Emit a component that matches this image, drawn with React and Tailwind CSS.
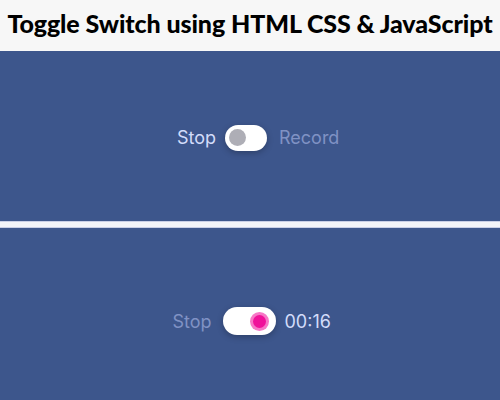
const Label = ({ children, dim, className = '' }) => (
  <span
    className={`text-[18px] ${dim ? 'text-[#8092c4]' : 'text-[#d3dcfa]'} ${className}`}
    style={{ fontFamily: 'Inter, "Noto Sans", sans-serif' }}
  >
    {children}
  </span>
);

const Toggle = ({ on }) =>
  on ? (
    <div className="w-[53px] h-[28px] rounded-full bg-white shadow-[0_2px_6px_rgba(0,0,0,0.25)] flex items-center justify-end pr-[7px]">
      <div className="w-[19px] h-[19px] rounded-full bg-[#f777c6] flex items-center justify-center">
        <div className="w-[13px] h-[13px] rounded-full bg-[#f0119a]" />
      </div>
    </div>
  ) : (
    <div className="w-[42px] h-[26px] rounded-full bg-white shadow-[0_2px_6px_rgba(0,0,0,0.25)] flex items-center pl-[4px]">
      <div className="w-[17px] h-[17px] rounded-full bg-[#aeaeb6]" />
    </div>
  );

export default function App() {
  return (
    <div className="w-[500px] h-[400px] flex flex-col bg-[#3d568c]">
      <header className="h-[51px] bg-[#f7f7f7] flex items-center justify-center pb-[3px]">
        <h1
          className="text-[25px] font-black text-black tracking-[-0.1px]"
          style={{ fontFamily: 'Lato, sans-serif' }}
        >
          Toggle Switch using HTML CSS &amp; JavaScript
        </h1>
      </header>

      <section className="h-[170px] grid grid-cols-[1fr_auto_1fr] items-center pr-[8px] pt-[3px]">
        <Label className="justify-self-end mr-[9px]">Stop</Label>
        <Toggle />
        <Label dim className="ml-[12px]">Record</Label>
      </section>

      <div className="h-[7px] bg-[#f2f3f8] border-y border-[#c9cfe6]" />

      <section className="flex-1 grid grid-cols-[1fr_auto_1fr] items-center pt-[14px] pr-[2px]">
        <Label dim className="justify-self-end mr-[11px]">Stop</Label>
        <Toggle on />
        <Label className="ml-[9px]">00:16</Label>
      </section>
    </div>
  );
}
